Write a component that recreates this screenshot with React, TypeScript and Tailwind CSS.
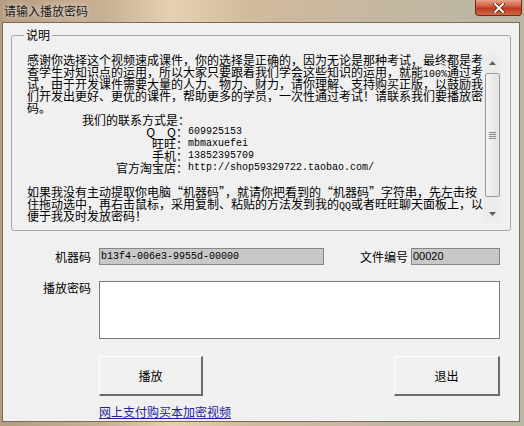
import React from 'react';

const cjk = '[font-family:"Noto_Sans_CJK_SC","Noto_Sans",sans-serif]';
const mono = '[font-family:"Liberation_Mono",monospace] text-[10px] leading-[12px]';

const contacts = [
  { label: 'Q　Q：', value: '609925153' },
  { label: '旺旺：', value: 'mbmaxuefei' },
  { label: '手机：', value: '13852395709' },
  { label: '官方淘宝店：', value: 'http://shop59329722.taobao.com/' },
];

function Scrollbar() {
  return (
    <div className="w-[17px] h-full flex flex-col bg-[#ececec]">
      {/* up arrow */}
      <div className="h-[17px] flex items-center justify-center">
        <svg width="7" height="4" viewBox="0 0 7 4">
          <path d="M0 4 L3.5 0 L7 4 Z" fill="#606060" />
        </svg>
      </div>
      <div className="flex-1 px-[1px] pt-[2px]">
        <div className="h-[124px] rounded-[2px] border border-[#9a9a9a] bg-[linear-gradient(90deg,#f4f4f4,#e2e2e2)] flex items-center justify-center">
          <div className="flex flex-col gap-[1px]">
            <div className="w-[7px] h-[1px] bg-[#8a8a8a]" />
            <div className="w-[7px] h-[1px] bg-[#8a8a8a]" />
            <div className="w-[7px] h-[1px] bg-[#8a8a8a]" />
            <div className="w-[7px] h-[1px] bg-[#8a8a8a]" />
          </div>
        </div>
      </div>
      <div className="h-[17px] flex items-center justify-center">
        <svg width="7" height="4" viewBox="0 0 7 4">
          <path d="M0 0 L3.5 4 L7 0 Z" fill="#606060" />
        </svg>
      </div>
    </div>
  );
}

function Button({ label, className }: { label: string; className?: string }) {
  return (
    <div
      className={`h-[40px] flex items-center justify-center bg-[#f0f0f0] border-t border-l border-r-2 border-b-2 border-t-[#fdfdfd] border-l-[#fdfdfd] border-r-[#6a6a6a] border-b-[#6a6a6a] text-[12px] text-black ${className ?? ''}`}
    >
      {label}
    </div>
  );
}

export default function App() {
  return (
    <div
      className={`w-[524px] h-[426px] overflow-hidden flex flex-col bg-[linear-gradient(90deg,#b59c80_0%,#c9b095_20%,#e6cfb2_33%,#d2b99c_48%,#c6b8a0_70%,#b9b6a2_100%)] ${cjk}`}
    >
      {/* Title bar */}
      <div className="h-[22px] flex items-start shrink-0">
        <div className="pl-[4px] pt-[4px] text-[12px] leading-[14px] text-[#1a1a1a] [text-shadow:0_0_6px_rgba(255,255,255,0.9)]">
          请输入播放密码
        </div>
        <div className="ml-auto mr-[2px] w-[47px] h-[16px] rounded-b-[4px] border border-t-0 border-[#6e2a1c] bg-[linear-gradient(180deg,#e9a48c_0%,#d0573c_45%,#b93a22_55%,#d46a48_100%)] flex items-center justify-center">
          <svg width="12" height="10" viewBox="0 0 12 10">
            <path d="M2 1 L10 9 M10 1 L2 9" stroke="#5a2010" strokeWidth="3.6" strokeLinecap="square" />
            <path d="M2 1 L10 9 M10 1 L2 9" stroke="#ffffff" strokeWidth="2" strokeLinecap="square" />
          </svg>
        </div>
      </div>

      {/* Client area */}
      <div className="ml-[2px] w-[518px] h-[400px] border border-[#7d6a58] bg-[#f0f0f0] flex flex-col">
        {/* Group box */}
        <div className="relative ml-[8px] mt-[12px] w-[500px] h-[196px] border border-[#a8a8a8] rounded-[3px] shrink-0">
          <div className="absolute left-[12px] -top-[8px] px-[2px] bg-[#f0f0f0] text-[12px] leading-[14px] text-black">
            说明
          </div>
          <div className="ml-[15px] mt-[18px] h-[168px] flex">
            <div className="w-[457px] text-[12px] leading-[12px] text-black whitespace-nowrap">
              <div className="h-[12px]">感谢你选择这个视频速成课件，你的选择是正确的，因为无论是那种考试，最终都是考</div>
              <div className="h-[12px]">
                查学生对知识点的运用，所以大家只要跟着我们学会这些知识的运用，就能<span className={mono}>100%</span>通过考
              </div>
              <div className="h-[12px]">试，由于开发课件需要大量的人力、物力、财力，请你理解、支持购买正版，以鼓励我</div>
              <div className="h-[12px]">们开发出更好、更优的课件，帮助更多的学员，一次性通过考试！请联系我们要播放密</div>
              <div className="h-[12px]">码。</div>
              <div className="h-[12px] pl-[55px]">我们的联系方式是：</div>
              {contacts.map((c) => (
                <div key={c.label} className="h-[12px] flex items-center">
                  <div className="w-[161px] text-right">{c.label}</div>
                  <div className={mono}>{c.value}</div>
                </div>
              ))}
              <div className="h-[12px]" />
              <div className="h-[12px]">如果我没有主动提取你电脑“机器码”，就请你把看到的“机器码”字符串，先左击按</div>
              <div className="h-[12px]">
                住拖动选中，再右击鼠标，采用复制、粘贴的方法发到我的<span className={mono}>QQ</span>或者旺旺聊天面板上，以
              </div>
              <div className="h-[12px]">便于我及时发放密码！</div>
            </div>
            <Scrollbar />
          </div>
        </div>

        {/* Machine code row */}
        <div className="mt-[17px] h-[17px] flex items-center text-[12px] text-black shrink-0">
          <div className="w-[88px] text-right">机器码</div>
          <div className='ml-[8px] w-[225px] h-[17px] border border-[#858585] bg-[#c8c8c8] flex items-center pl-[1px] [font-family:"Liberation_Mono",monospace] text-[10px]'>
            b13f4-006e3-9955d-00000
          </div>
          <div className="ml-[36px] w-[48px]">文件编号</div>
          <div className='ml-[3px] w-[89px] h-[17px] border border-[#858585] bg-[#c8c8c8] flex items-center pl-[1px] [font-family:"Liberation_Sans",sans-serif] text-[11px]'>
            00020
          </div>
        </div>

        {/* Password row */}
        <div className="mt-[16px] h-[58px] flex text-[12px] text-black shrink-0">
          <div className="w-[88px] text-right leading-[14px]">播放密码</div>
          <div className="ml-[8px] w-[401px] h-[58px] border border-[#7a7a7a] bg-white" />
        </div>

        {/* Buttons */}
        <div className="mt-[17px] flex shrink-0">
          <Button label="播放" className="ml-[96px] w-[104px]" />
          <Button label="退出" className="ml-[191px] w-[106px]" />
        </div>

        {/* Link */}
        <div className="mt-[9px] ml-[96px] text-[12px] leading-[14px] text-[#22229a] underline">
          网上支付购买本加密视频
        </div>
      </div>
    </div>
  );
}
